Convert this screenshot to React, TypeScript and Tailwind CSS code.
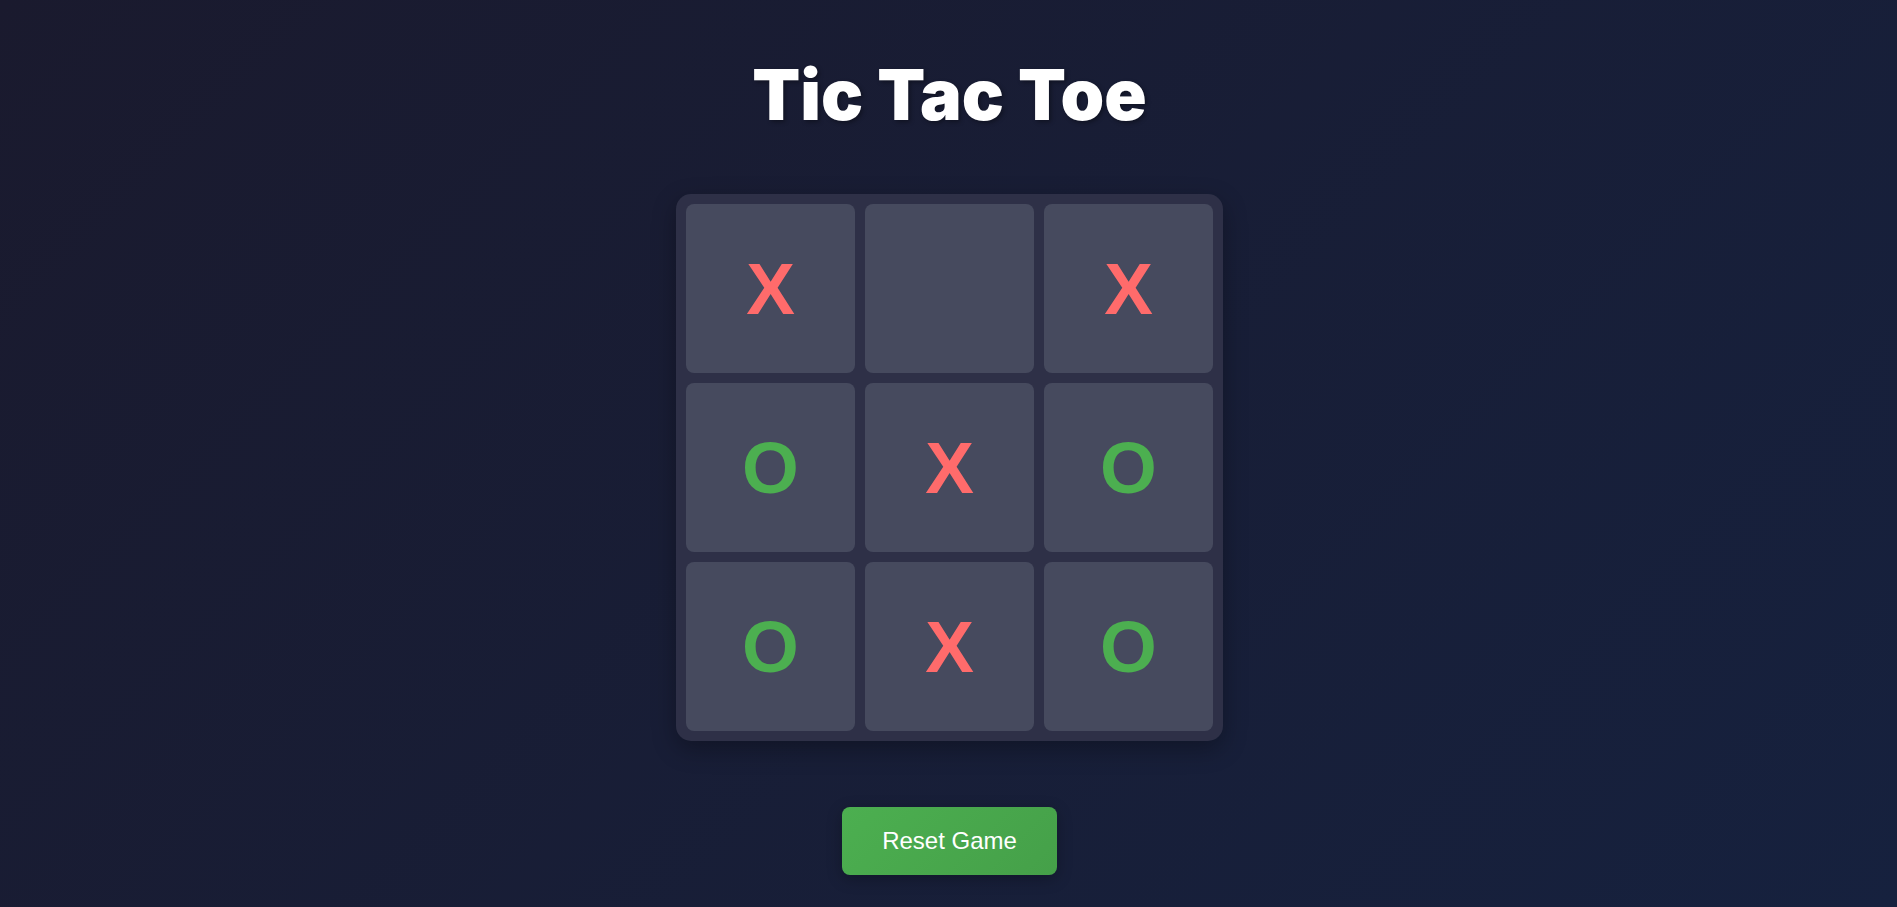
const board: Array<"X" | "O" | ""> = ["X", "", "X", "O", "X", "O", "O", "X", "O"];

export default function App() {
  return (
    <div className="min-h-screen w-full bg-[linear-gradient(135deg,#1a1a2e,#16213e)] flex flex-col items-center pt-[60px] pl-[2px]">
      <h1 className="font-['Inter','Liberation_Sans',sans-serif] text-[70px] leading-none font-black text-white [text-shadow:2px_2px_4px_rgba(0,0,0,0.35)]">
        Tic Tac Toe
      </h1>

      {/* board */}
      <div className="mt-[64px] grid grid-cols-[repeat(3,169px)] grid-rows-[repeat(3,169px)] gap-[10px] p-[10px] rounded-[15px] bg-[#2e3047] shadow-[0_8px_24px_rgba(0,0,0,0.3)]">
        {board.map((v, i) => (
          <button
            key={i}
            className={`flex items-center justify-center rounded-[8px] bg-[#464a5e] font-['Liberation_Sans',Arial,sans-serif] text-[73px] font-bold leading-none ${
              v === "X" ? "text-[#ff6b6b]" : "text-[#4caf50]"
            }`}
          >
            {v}
          </button>
        ))}
      </div>

      <button className="mt-[66px] px-10 py-5 rounded-[8px] bg-[linear-gradient(135deg,#4caf50,#45a049)] text-white font-['Liberation_Sans',Arial,sans-serif] text-[24px] leading-[1.15] shadow-[0_4px_15px_rgba(0,0,0,0.25)]">
        Reset Game
      </button>
    </div>
  );
}
